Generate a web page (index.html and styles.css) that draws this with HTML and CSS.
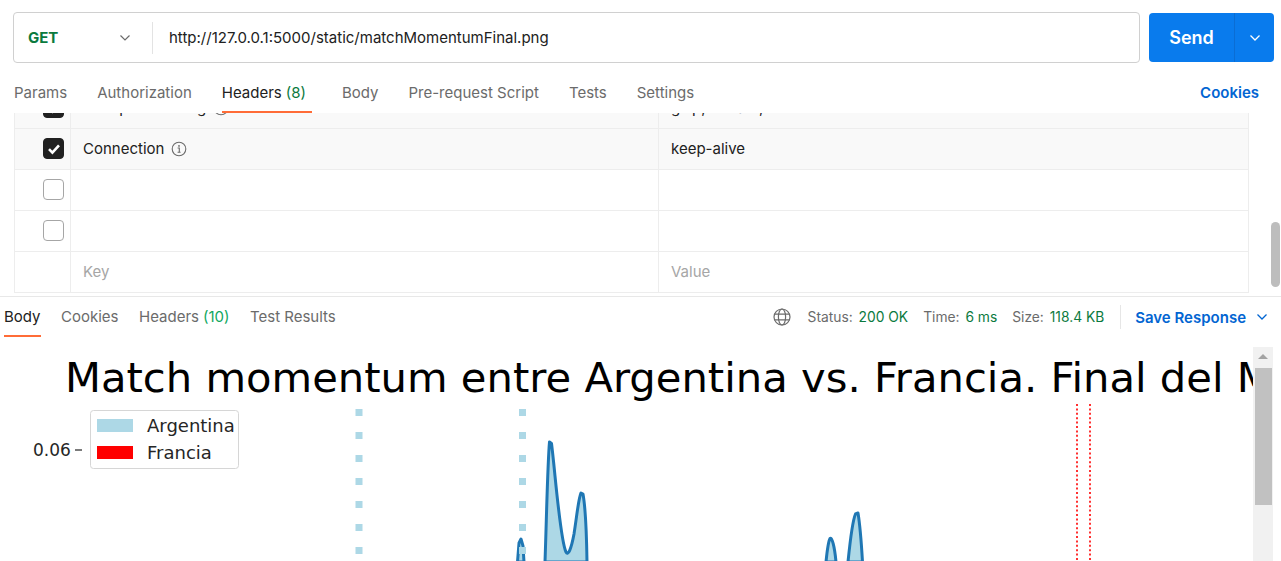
FILE: index.html
```html
<!DOCTYPE html>
<html lang="en">
<head>
<meta charset="utf-8">
<title>Postman request</title>
<link rel="stylesheet" href="styles.css">
</head>
<body>
<div class="app">
  <div class="request-bar">
    <div class="url-box">
      <div class="method">
        <span class="method-name">GET</span>
        <svg class="chev" width="12" height="8" viewBox="0 0 12 8"><path d="M1.5 1.5 L6 6 L10.5 1.5" fill="none" stroke="#6b6b6b" stroke-width="1.2"/></svg>
      </div>
      <div class="url-divider"></div>
      <div class="url">http://127.0.0.1:5000/static/matchMomentumFinal.png</div>
    </div>
    <div class="send">
      <span class="send-label">Send</span>
      <span class="send-split"><svg width="12" height="8" viewBox="0 0 12 8"><path d="M1.5 1.5 L6 6 L10.5 1.5" fill="none" stroke="#fff" stroke-width="1.3"/></svg></span>
    </div>
  </div>

  <div class="req-tabs">
    <div class="tabs">
      <span class="tab">Params</span>
      <span class="tab">Authorization</span>
      <span class="tab active">Headers <span class="count">(8)</span></span>
      <span class="tab">Body</span>
      <span class="tab">Pre-request Script</span>
      <span class="tab">Tests</span>
      <span class="tab">Settings</span>
    </div>
    <span class="cookies">Cookies</span>
  </div>

  <div class="req-pane">
    <div class="table-viewport">
      <div class="htable">
        <div class="hrow shaded">
          <div class="cell check"><span class="box checked"><svg width="16" height="16" viewBox="0 0 16 16"><path d="M3 8.2 L6.4 11.6 L13 4.4" fill="none" stroke="#fff" stroke-width="2.6"/></svg></span></div>
          <div class="cell key">Accept-Encoding <svg class="info" width="16" height="16" viewBox="0 0 16 16"><circle cx="8" cy="8" r="6.8" fill="none" stroke="#6b6b6b" stroke-width="1.1"/><circle cx="8" cy="4.9" r="0.9" fill="#6b6b6b"/><path d="M6.6 7 H8.3 V11.2 M6.6 11.3 H9.6" fill="none" stroke="#6b6b6b" stroke-width="1.1"/></svg></div>
          <div class="cell val">gzip, deflate, br</div>
        </div>
        <div class="hrow shaded">
          <div class="cell check"><span class="box checked"><svg width="16" height="16" viewBox="0 0 16 16"><path d="M3 8.2 L6.4 11.6 L13 4.4" fill="none" stroke="#fff" stroke-width="2.6"/></svg></span></div>
          <div class="cell key">Connection <svg class="info" width="16" height="16" viewBox="0 0 16 16"><circle cx="8" cy="8" r="6.8" fill="none" stroke="#6b6b6b" stroke-width="1.1"/><circle cx="8" cy="4.9" r="0.9" fill="#6b6b6b"/><path d="M6.6 7 H8.3 V11.2 M6.6 11.3 H9.6" fill="none" stroke="#6b6b6b" stroke-width="1.1"/></svg></div>
          <div class="cell val">keep-alive</div>
        </div>
        <div class="hrow">
          <div class="cell check"><span class="box"></span></div>
          <div class="cell key"></div>
          <div class="cell val"></div>
        </div>
        <div class="hrow">
          <div class="cell check"><span class="box"></span></div>
          <div class="cell key"></div>
          <div class="cell val"></div>
        </div>
        <div class="hrow">
          <div class="cell check"></div>
          <div class="cell key placeholder">Key</div>
          <div class="cell val placeholder">Value</div>
        </div>
      </div>
    </div>
    <div class="outer-scroll"><div class="outer-thumb"></div></div>
  </div>

  <div class="resp-bar">
    <div class="rtabs">
      <span class="rtab active">Body</span>
      <span class="rtab">Cookies</span>
      <span class="rtab">Headers <span class="count2">(10)</span></span>
      <span class="rtab">Test Results</span>
    </div>
    <div class="resp-meta">
      <svg class="globe" width="18" height="18" viewBox="0 0 18 18"><circle cx="9" cy="9" r="8" fill="none" stroke="#6b6b6b" stroke-width="1.2"/><ellipse cx="9" cy="9" rx="3.6" ry="8" fill="none" stroke="#6b6b6b" stroke-width="1.2"/><path d="M1.6 6.2 H16.4 M1.6 11.8 H16.4" stroke="#6b6b6b" stroke-width="1.2"/></svg>
      <span class="meta">Status: <span class="ok">200 OK</span></span>
      <span class="meta">Time: <span class="ok">6 ms</span></span>
      <span class="meta">Size: <span class="ok">118.4 KB</span></span>
      <span class="meta-divider"></span>
      <span class="save">Save Response</span>
      <svg class="save-chev" width="12" height="8" viewBox="0 0 12 8"><path d="M1.5 1.5 L6 6 L10.5 1.5" fill="none" stroke="#0265d2" stroke-width="1.3"/></svg>
    </div>
  </div>

  <div class="resp-body">
    <div class="canvas">
      <svg class="plot" width="1253" height="216" viewBox="0 345 1253 216">
        <text class="title" x="65" y="392">Match momentum entre Argentina vs. Francia. Final del Mundial</text>
        <text class="ytick" x="33" y="456">0.06</text>
        <line x1="75" x2="82" y1="450" y2="450" stroke="#333" stroke-width="1.3"/>
        <rect x="90.5" y="410.5" width="148" height="58" rx="3" fill="#fff" stroke="#d6d6d6"/>
        <rect x="97" y="419" width="36" height="13" fill="#add8e6"/>
        <rect x="97" y="446" width="36" height="13" fill="#ff0000"/>
        <text class="leg" x="147" y="432">Argentina</text>
        <text class="leg" x="147" y="459">Francia</text>
        <g fill="#add8e6" stroke="#1f77b4" stroke-width="3" stroke-linejoin="round">
          <path d="M517.5 562 L519 543 L521 539 L523 546 L524 562 Z"/>
          <path d="M545 562 C546.5 520 547.5 465 549.5 442 L551.5 443.5 C555 470 560 540 566 552 C568 556 571 550 574 534 C577 515 578.5 498 581 493 L583 494 C585 505 586.5 530 587 562 Z"/>
          <path d="M826 562 C827 552 828 542 830 538.5 C832 537 834.5 546 836 562 Z"/>
          <path d="M848 562 C850 542 852 522 855.5 514 L858 513 C860 525 861.5 545 862.5 562 Z"/>
        </g>
        <line x1="359" x2="359" y1="409" y2="561" stroke="#add8e6" stroke-width="7" stroke-dasharray="7 16"/>
        <line x1="522.5" x2="522.5" y1="409" y2="561" stroke="#add8e6" stroke-width="7" stroke-dasharray="7 16"/>
        <line x1="1077" x2="1077" y1="404" y2="561" stroke="#ff3030" stroke-width="2" stroke-dasharray="2 2.4"/>
        <line x1="1090" x2="1090" y1="404" y2="561" stroke="#ff3030" stroke-width="2" stroke-dasharray="2 2.4"/>
      </svg>
    </div>
    <div class="inner-scroll">
      <svg class="arrow" width="10" height="6" viewBox="0 0 10 6"><path d="M0 6 L5 1 L10 6 Z" fill="#a3a3a3"/></svg>
      <div class="inner-thumb"></div>
    </div>
  </div>
</div>
</body>
</html>
```

FILE: styles.css
```css
* { box-sizing: border-box; }

body {
  margin: 0;
  width: 1281px;
  height: 561px;
  overflow: hidden;
  background: #fff;
  font-family: Inter, "Noto Sans", sans-serif;
  color: #212121;
}

.app { display: flex; flex-direction: column; height: 561px; }
.app > * { flex-shrink: 0; }

/* request bar */
.request-bar {
  height: 63px;
  display: flex;
  align-items: center;
  padding: 12px 7px 0 13px;
  gap: 9px;
}
.url-box {
  flex: 1;
  height: 51px;
  border: 1px solid #d0d0d0;
  border-radius: 4px;
  display: flex;
  align-items: center;
}
.method {
  width: 138px;
  display: flex;
  align-items: center;
  justify-content: space-between;
  padding: 0 21px 0 14px;
}
.method-name { font-size: 15px; font-weight: 700; color: #0b7a3e; }
.url-divider { width: 1px; height: 32px; background: #e3e3e3; }
.url { padding-left: 16px; font-size: 15px; color: #212121; padding-bottom: 1px; }

.send {
  width: 125px;
  height: 49px;
  background: #097bed;
  border-radius: 4px;
  display: flex;
  color: #fff;
}
.send-label {
  flex: 1;
  display: flex;
  align-items: center;
  justify-content: center;
  font-size: 18px;
  font-weight: 600;
}
.send-split {
  width: 40px;
  border-left: 1px solid #0a6dd4;
  display: flex;
  align-items: center;
  justify-content: center;
}

/* request tabs */
.req-tabs {
  margin-top: 9px;
  height: 41px;
  display: flex;
  justify-content: space-between;
  align-items: stretch;
  padding: 0 22px 0 14px;
  font-size: 15px;
  background: #fff;
}
.tabs { display: flex; gap: 30px; }
.tab {
  display: flex;
  align-items: center;
  color: #6b6b6b;
  border-bottom: 2px solid transparent;
  padding-top: 1px;
}
.tab.active { color: #212121; border-bottom-color: #ff6c37; padding-right: 6px; }
.count { color: #0b7a3e; margin-left: 4px; }
.cookies {
  display: flex;
  align-items: center;
  color: #0265d2;
  font-weight: 600;
  padding-bottom: 1px;
}

/* request pane / headers table */
.req-pane { height: 183px; display: flex; overflow: hidden; }
.table-viewport {
  flex: 1;
  height: 183px;
  overflow: hidden;
  padding: 0 22px 0 14px;
}
.htable {
  margin-top: -25.5px;
  border-left: 1px solid #ededed;
  border-right: 1px solid #ededed;
  font-size: 15px;
}
.hrow {
  display: grid;
  grid-template-columns: 56px 588px 1fr;
  height: 41px;
  border-bottom: 1px solid #ededed;
}
.hrow.shaded { background: #f9f9f9; }
.cell {
  display: flex;
  align-items: center;
  border-right: 1px solid #ededed;
  padding-left: 12px;
}
.cell.val { border-right: none; }
.cell.check { justify-content: flex-end; padding: 0 6px 0 0; }
.box {
  width: 21px;
  height: 21px;
  border: 1px solid #a6a6a6;
  border-radius: 4px;
  background: #fff;
  display: flex;
  align-items: center;
  justify-content: center;
}
.box.checked { background: #212121; border-color: #212121; }
.info { margin-left: 7px; }
.placeholder { color: #a6a6a6; }

.outer-scroll { width: 10px; }
.outer-thumb {
  margin-top: 109px;
  width: 9px;
  height: 65px;
  border-radius: 5px;
  background: #bdbdbd;
}

/* response bar */
.resp-bar {
  border-top: 1px solid #e8e8e8;
  height: 49px;
  display: flex;
  justify-content: space-between;
  padding: 0 13px 0 4px;
}
.rtabs { display: flex; gap: 20.5px; height: 40px; font-size: 15px; }
.rtab {
  display: flex;
  align-items: center;
  color: #6b6b6b;
  border-bottom: 2px solid transparent;
  padding-top: 1px;
}
.rtab.active { color: #212121; border-bottom-color: #ff6c37; }
.count2 { color: #10a860; margin-left: 4px; }

.resp-meta {
  display: flex;
  align-items: center;
  height: 40px;
  font-size: 13.8px;
  color: #6b6b6b;
}
.globe { margin-right: 17px; }
.meta { margin-right: 15px; }
.meta:nth-of-type(3) { margin-right: 16px; }
.ok { color: #0b7a3e; margin-left: 2px; }
.meta-divider { width: 1px; height: 24px; background: #e6e6e6; margin: 0 14px 0 0; }
.save { color: #0265d2; font-weight: 600; font-size: 15px; }
.save-chev { margin-left: 10px; }

/* response body */
.resp-body { height: 216px; display: flex; padding-right: 8px; }
.canvas { flex: 1; overflow: hidden; }
.plot { display: block; }
.title { font-family: "DejaVu Sans", sans-serif; font-size: 41.7px; fill: #000; }
.ytick { font-family: "DejaVu Sans", sans-serif; font-size: 17px; fill: #262626; }
.leg { font-family: "DejaVu Sans", sans-serif; font-size: 18px; fill: #262626; }

.inner-scroll {
  width: 20px;
  margin-top: 2px;
  background: #f1f1f1;
  display: flex;
  flex-direction: column;
  align-items: center;
}
.arrow { margin-top: 6px; }
.inner-thumb {
  margin-top: 9px;
  width: 17px;
  height: 137px;
  background: #c1c1c1;
}
```
